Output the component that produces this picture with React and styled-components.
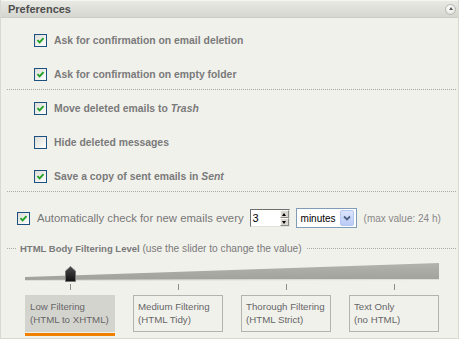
import React from 'react';
import styled, { createGlobalStyle } from 'styled-components';

const GlobalStyle = createGlobalStyle`
    body {
        margin: 0;
        background: #ffffff;
        font-family: "Liberation Sans", Arial, sans-serif;
    }
`

const Panel = styled.div`
    width: 459px;
    height: 339px;
    box-sizing: border-box;
    background: #f1f1ec;
    border: 1px solid #d9d9d3;
    border-top: none;
    display: flex;
    flex-direction: column;
`

const Header = styled.div`
    height: 18px;
    box-sizing: border-box;
    display: flex;
    align-items: center;
    padding: 0 2px 0 7px;
    background: linear-gradient(#e9e9e4, #d6d6d1);
    border-top: 1px solid #f5f5f2;
    border-bottom: 1px solid #cdcdc8;
`

const Title = styled.span`
    font-size: 11px;
    font-weight: bold;
    color: #4e4e4e;
`

const Collapse = styled.span`
    margin-left: auto;
    width: 11px;
    height: 11px;
    box-sizing: border-box;
    border-radius: 50%;
    border: 1px solid #b8b8b3;
    background: radial-gradient(circle at 40% 35%, #ffffff, #dcdcd7);
    display: flex;
    align-items: center;
    justify-content: center;

    &::before {
        content: '';
        border-left: 2.5px solid transparent;
        border-right: 2.5px solid transparent;
        border-bottom: 3px solid #555;
        margin-top: -1px;
    }
`

const Group = styled.div`
    display: flex;
    flex-direction: column;
    gap: 14px;
    padding: ${({top}) => top}px 0 ${({bottom}) => bottom}px ${({indent}) => indent}px;
`

const Row = styled.div`
    display: flex;
    align-items: center;
    height: 20px;
    gap: 7px;
`

const Label = styled.span`
    font-size: 10.4px;
    font-weight: bold;
    color: #7a7a7a;
    white-space: nowrap;

    em {
        font-style: italic;
    }
`

const PlainLabel = styled.span`
    font-size: 11.3px;
    color: #777;
    white-space: nowrap;
`

const Hint = styled.span`
    font-size: 10px;
    color: #888;
    margin-left: 7px;
    white-space: nowrap;
`

const Separator = styled.div`
    border-top: 1px dotted #a9a9a4;
    margin: 0 2px 0 6px;
`

const Box = styled.span`
    width: 13px;
    height: 13px;
    flex: none;
    box-sizing: border-box;
    border: 1px solid #1c5180;
    background: linear-gradient(135deg, #dcdcd7, #ffffff);
    display: flex;
    align-items: center;
    justify-content: center;
`

const Checkbox = ({checked}) => (
    <Box>
        {checked && (
            <svg width="9" height="9" viewBox="0 0 9 9">
                <path d="M1.5 4.2 L3.6 6.3 L7.5 2.2" fill="none" stroke="#21a121" strokeWidth="1.9"/>
            </svg>
        )}
    </Box>
)

const AutoRow = styled(Row)`
    padding: 16px 0 0 16px;
    gap: 0;

    & > ${PlainLabel} {
        margin-left: 7px;
    }
`

const Spin = styled.div`
    margin-left: 6px;
    width: 40px;
    height: 18px;
    box-sizing: border-box;
    display: flex;
    background: #fff;
    border: 1px solid;
    border-color: #6f6f6f #e2e2dd #e2e2dd #6f6f6f;
`

const SpinValue = styled.span`
    flex: 1;
    font-size: 11px;
    color: #000;
    padding: 2px 0 0 2px;
`

const SpinButtons = styled.div`
    width: 9px;
    display: flex;
    flex-direction: column;
`

const SpinButton = styled.span`
    flex: 1;
    background: #d9d7cf;
    border: 1px solid;
    border-color: #f7f7f4 #8a8a86 #8a8a86 #f7f7f4;
    display: flex;
    align-items: center;
    justify-content: center;

    &::before {
        content: '';
        border-left: 2px solid transparent;
        border-right: 2px solid transparent;
        ${({down}) => down ? 'border-top: 3px solid #000;' : 'border-bottom: 3px solid #000;'}
    }
`

const Select = styled.div`
    margin-left: 6px;
    width: 61px;
    height: 20px;
    box-sizing: border-box;
    border: 1px solid #7f9db9;
    background: #fff;
    display: flex;
    align-items: center;
    padding: 0 2px 0 4px;
`

const SelectText = styled.span`
    flex: 1;
    font-size: 10px;
    color: #000;
`

const SelectButton = styled.span`
    width: 14px;
    height: 16px;
    box-sizing: border-box;
    border: 1px solid #b6c7ef;
    border-radius: 2px;
    background: linear-gradient(#dbe5fc, #b8cbf5);
    display: flex;
    align-items: center;
    justify-content: center;
`

const Legend = styled.div`
    display: flex;
    align-items: center;
    margin: 14px 2px 0 6px;
    height: 12px;
    font-size: 10.2px;
    color: #7a7a7a;
    white-space: nowrap;

    b {
        font-weight: bold;
        font-size: 9.5px;
    }
`

const LegendLine = styled.span`
    border-top: 1px dotted #a9a9a4;
    width: ${({width}) => width ? `${width}px` : 'auto'};
    flex: ${({width}) => width ? 'none' : 1};
`

const LegendText = styled.span`
    margin: 0 5px 0 4px;
`

const Slider = styled.div`
    position: relative;
    margin: 9px 0 0 24px;
    width: 414px;
    height: 18px;
`

const Thumb = styled.svg`
    position: absolute;
    top: 3px;
`

const Ticks = styled.div`
    display: flex;
    gap: 18px;
    margin: 3px 0 0 24px;
`

const Tick = styled.span`
    width: 90px;
    height: 6px;
    display: flex;
    justify-content: center;

    &::before {
        content: '';
        width: 1px;
        background: #8c8c88;
    }
`

const Options = styled.div`
    display: flex;
    gap: 18px;
    margin: 5px 0 0 24px;
`

const Option = styled.div`
    width: 90px;
    display: flex;
    flex-direction: column;
`

const OptionBox = styled.div`
    height: 37px;
    box-sizing: border-box;
    padding: 4px 4px 0;
    border: 1px solid ${({active}) => active ? '#d4d4cf' : '#b4b4af'};
    background: ${({active}) => active ? '#d4d4cf' : 'transparent'};
    font-size: 9.7px;
    line-height: 13px;
    color: #666;
    white-space: nowrap;
`

const OptionBar = styled.div`
    height: 3px;
    margin-top: 1px;
    background: ${({active}) => active ? '#f08000' : 'transparent'};
`

const levels = [
    ['Low Filtering', '(HTML to XHTML)'],
    ['Medium Filtering', '(HTML Tidy)'],
    ['Thorough Filtering', '(HTML Strict)'],
    ['Text Only', '(no HTML)'],
]

const level = 0

const App = () => (
    <>
        <GlobalStyle />
        <Panel>
            <Header>
                <Title>Preferences</Title>
                <Collapse />
            </Header>

            <Group top={12} bottom={5} indent={33}>
                <Row><Checkbox checked /><Label>Ask for confirmation on email deletion</Label></Row>
                <Row><Checkbox checked /><Label>Ask for confirmation on empty folder</Label></Row>
            </Group>
            <Separator />
            <Group top={8} bottom={5} indent={33}>
                <Row><Checkbox checked /><Label>Move deleted emails to <em>Trash</em></Label></Row>
                <Row><Checkbox /><Label>Hide deleted messages</Label></Row>
                <Row><Checkbox checked /><Label>Save a copy of sent emails in <em>Sent</em></Label></Row>
            </Group>
            <Separator />

            <AutoRow>
                <Checkbox checked />
                <PlainLabel>Automatically check for new emails every</PlainLabel>
                <Spin>
                    <SpinValue>3</SpinValue>
                    <SpinButtons>
                        <SpinButton />
                        <SpinButton down />
                    </SpinButtons>
                </Spin>
                <Select>
                    <SelectText>minutes</SelectText>
                    <SelectButton>
                        <svg width="8" height="6" viewBox="0 0 8 6">
                            <path d="M1 1.5 L4 4.5 L7 1.5" fill="none" stroke="#4d6185" strokeWidth="1.8"/>
                        </svg>
                    </SelectButton>
                </Select>
                <Hint>(max value: 24 h)</Hint>
            </AutoRow>

            <Legend>
                <LegendLine width={9} />
                <LegendText><b>HTML Body Filtering Level</b> (use the slider to change the value)</LegendText>
                <LegendLine />
            </Legend>

            <Slider>
                <svg width="414" height="18" viewBox="0 0 414 18">
                    <defs>
                        <linearGradient id="track" x1="0" y1="0" x2="0" y2="1">
                            <stop offset="0" stopColor="#b3b3ae"/>
                            <stop offset="1" stopColor="#a2a29d"/>
                        </linearGradient>
                    </defs>
                    <polygon points="0,14 414,0 414,16 0,17" fill="url(#track)"/>
                    <line x1="0" y1="17.5" x2="414" y2="16.5" stroke="#dededa" strokeWidth="1"/>
                </svg>
                <Thumb width="11" height="16" viewBox="0 0 11 16" style={{left: level * 108 + 45 - 5.5}}>
                    <defs>
                        <linearGradient id="thumb" x1="0" y1="0" x2="0" y2="1">
                            <stop offset="0" stopColor="#4a4a4a"/>
                            <stop offset="1" stopColor="#111"/>
                        </linearGradient>
                    </defs>
                    <path d="M5.5 0.5 L10.5 5 L10.5 15.5 L0.5 15.5 L0.5 5 Z" fill="url(#thumb)" stroke="#777" strokeWidth="1"/>
                </Thumb>
            </Slider>

            <Ticks>
                {levels.map((_, i) => <Tick key={i} />)}
            </Ticks>

            <Options>
                {levels.map(([name, sub], i) => (
                    <Option key={name}>
                        <OptionBox active={i === level}>{name}<br />{sub}</OptionBox>
                        <OptionBar active={i === level} />
                    </Option>
                ))}
            </Options>
        </Panel>
    </>
)

export default App
